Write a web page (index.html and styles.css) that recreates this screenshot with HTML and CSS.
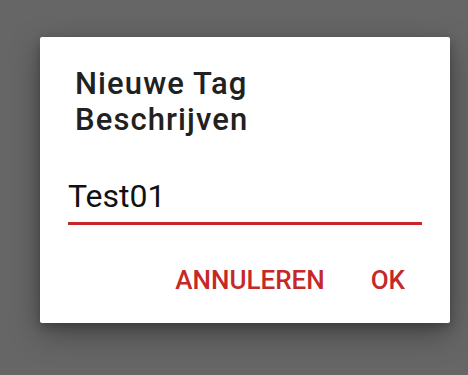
FILE: index.html
```html
<!DOCTYPE html>
<html>
<head>
<meta charset="utf-8">
<link rel="stylesheet" href="styles.css">
</head>
<body>
<div class="dialog">
  <div class="title">Nieuwe Tag<br>Beschrijven</div>
  <div class="field">
    <div class="value">Test01</div>
    <div class="line"></div>
  </div>
  <div class="actions">
    <span class="btn">ANNULEREN</span>
    <span class="btn">OK</span>
  </div>
</div>
</body>
</html>
```
FILE: styles.css
```css
html, body {
  margin: 0;
  padding: 0;
  background: #666666;
  width: 468px;
  height: 375px;
  overflow: hidden;
  font-family: Roboto, "Liberation Sans", sans-serif;
}
.dialog {
  margin: 37px 0 0 40px;
  width: 410px;
  height: 286px;
  background: #ffffff;
  border-radius: 2px;
  box-shadow: 0 10px 30px rgba(0,0,0,0.35), 0 4px 10px rgba(0,0,0,0.2);
  box-sizing: border-box;
  padding-top: 29px;
  display: flex;
  flex-direction: column;
}
.title {
  padding-left: 35px;
  font-size: 31px;
  font-weight: 500;
  letter-spacing: 1.1px;
  line-height: 36px;
  color: #212121;
}
.field {
  margin: 39px 28px 0 28px;
}
.value {
  font-size: 32px;
  line-height: 38px;
  color: #111111;
}
.line {
  margin-top: 7px;
  height: 3px;
  background: #c62828;
}
.actions {
  display: flex;
  justify-content: flex-end;
  gap: 46px;
  padding-right: 45px;
  margin-top: 40px;
}
.btn {
  font-size: 26px;
  font-weight: 500;
  color: #c62828;
  line-height: 30px;
}
```
